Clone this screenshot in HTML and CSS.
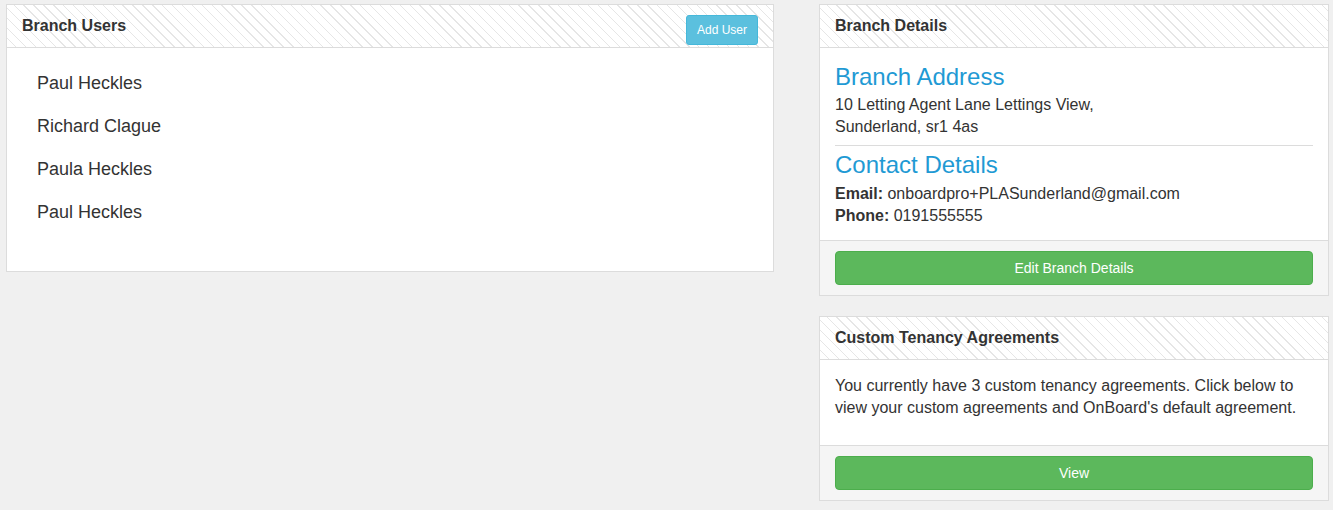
FILE: index.html
```html
<!DOCTYPE html>
<html lang="en">
<head>
	<meta charset="UTF-8">
	<title>Branch</title>
	<link rel="stylesheet" href="styles.css">
</head>
<body>
	<div class="page">
		<div class="col-main">
			<div class="panel">
				<div class="panel-head">
					<h3 class="panel-title">Branch Users</h3>
					<a href="#" class="btn btn-info btn-sm">Add User</a>
				</div>
				<ul class="user-list">
					<li>Paul Heckles</li>
					<li>Richard Clague</li>
					<li>Paula Heckles</li>
					<li>Paul Heckles</li>
				</ul>
			</div>
		</div>
		<div class="col-side">
			<div class="panel">
				<div class="panel-head">
					<h3 class="panel-title">Branch Details</h3>
				</div>
				<div class="panel-body details">
					<h2 class="sub-title">Branch Address</h2>
					<p class="lines">10 Letting Agent Lane Lettings View,<br>Sunderland, sr1 4as</p>
					<hr>
					<h2 class="sub-title">Contact Details</h2>
					<p class="lines contact"><b>Email:</b> onboardpro+PLASunderland@gmail.com<br><b>Phone:</b> 0191555555</p>
				</div>
				<div class="panel-foot">
					<a href="#" class="btn btn-success btn-block">Edit Branch Details</a>
				</div>
			</div>
			<div class="panel">
				<div class="panel-head">
					<h3 class="panel-title">Custom Tenancy Agreements</h3>
				</div>
				<div class="panel-body">
					<p class="text">You currently have 3 custom tenancy agreements. Click below to view your custom agreements and OnBoard's default agreement.</p>
				</div>
				<div class="panel-foot">
					<a href="#" class="btn btn-success btn-block">View</a>
				</div>
			</div>
		</div>
	</div>
</body>
</html>
```

FILE: styles.css
```css
*{
	margin:0;
	padding:0;
	box-sizing: border-box;
}
body{
	background: #f0f0f0;
	font-family: "Liberation Sans", Arial, sans-serif;
	color: #333;
	padding:4px 0 0 6px;
}
a{
	text-decoration: none;
}
.page{
	display: flex;
	gap: 45px;
	align-items: flex-start;
}
.col-main{
	width:768px;
}
.col-side{
	width:510px;
	display: flex;
	flex-direction: column;
	gap: 20px;
}
.panel{
	background: #fff;
	border:1px solid #dcdcdc;
}
.panel-head{
	height: 43px;
	padding:0 15px;
	display: flex;
	justify-content: space-between;
	align-items: center;
	border-bottom:1px solid #dcdcdc;
	background: repeating-linear-gradient(45deg, #fff 0, #fff 6px, #e6e6e6 6px, #e6e6e6 7px);
}
.panel-title{
	font-size: 16px;
	font-weight: bold;
	color: #333;
}
.btn{
	display: block;
	color: #fff;
	text-align: center;
	border:1px solid transparent;
	border-radius: 4px;
}
.btn-sm{
	font-size: 12px;
	line-height: 18px;
	padding:5px 10px;
	border-radius: 3px;
	align-self: flex-start;
	margin-top: 10px;
}
.btn-info{
	background: #5bc0de;
	border-color: #46b8da;
}
.btn-success{
	background: #5cb85c;
	border-color: #4cae4c;
}
.btn-block{
	font-size: 14px;
	line-height: 20px;
	padding:6px 12px;
}
.user-list{
	list-style: none;
	padding:14px 15px 37px 30px;
}
.user-list li{
	font-size: 18px;
	line-height: 23px;
	padding:10px 0;
}
.panel-body{
	padding:15px 15px 16px;
}
.details{
	padding:16px 15px 13px;
}
.sub-title{
	font-size: 24px;
	font-weight: normal;
	line-height: 26px;
	color: #1f9ad4;
}
.lines{
	font-size: 16px;
	line-height: 22px;
	margin-top: 4px;
}
.lines.contact{
	margin-top: 5px;
}
.details hr{
	border:none;
	border-top:1px solid #dcdcdc;
	margin:7px 0 6px;
}
.text{
	font-size: 16px;
	line-height: 22px;
	margin-bottom: 10px;
}
.panel-foot{
	background: #f5f5f5;
	border-top:1px solid #dcdcdc;
	padding:10px 15px;
}
```
